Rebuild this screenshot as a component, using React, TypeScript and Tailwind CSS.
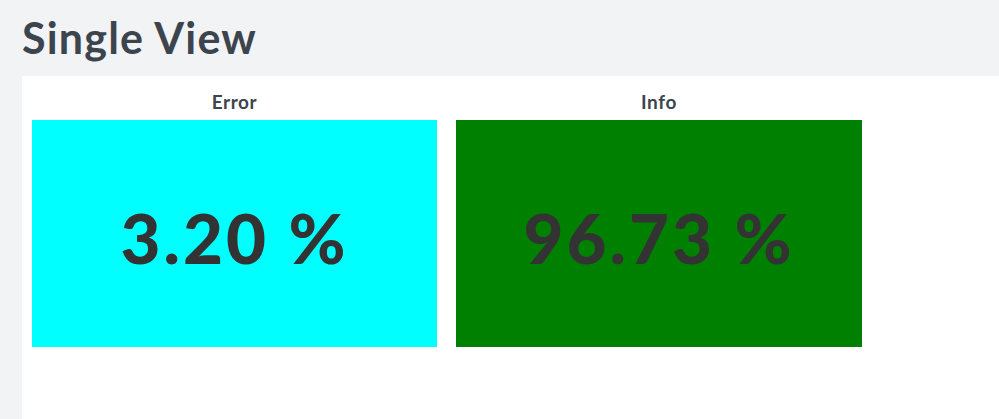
export default function App() {
  const font = { fontFamily: 'Lato, "Open Sans", sans-serif' };
  return (
    <div className="w-[999px] h-[419px] overflow-hidden bg-[#f2f3f5] flex flex-col" style={font}>
      <h1 className="pl-[22px] pt-[14px] h-[76px] text-[43px] leading-[48px] font-bold text-[#3c444d] tracking-[1.2px]">
        Single View
      </h1>
      <div className="ml-[22px] flex-1 bg-white pl-[10px] pt-[14px]">
        <div className="flex gap-[19px]">
          <div className="w-[405px] flex flex-col">
            <div className="h-[30px] text-center text-[19px] leading-[24px] font-bold text-[#3c444d] tracking-[0.6px]">Error</div>
            <div className="h-[227px] bg-[#00ffff] flex items-center justify-center">
              <span className="text-[69px] leading-none font-black text-[#333333] tracking-[3px] pt-[8px]">3.20 %</span>
            </div>
          </div>
          <div className="w-[406px] flex flex-col">
            <div className="h-[30px] text-center text-[19px] leading-[24px] font-bold text-[#3c444d] tracking-[0.6px]">Info</div>
            <div className="h-[227px] bg-[#008000] flex items-center justify-center">
              <span className="text-[69px] leading-none font-black text-[#333333] tracking-[3px] pt-[8px]">96.73 %</span>
            </div>
          </div>
        </div>
      </div>
    </div>
  );
}
